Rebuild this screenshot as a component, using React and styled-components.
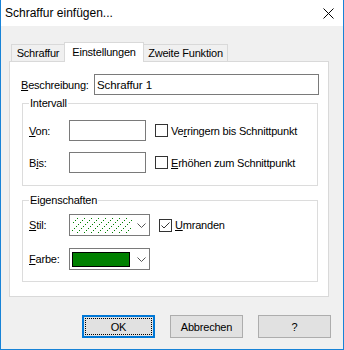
import React from 'react'
import styled, { createGlobalStyle } from 'styled-components'

const GlobalStyle = createGlobalStyle`
  html, body {
    margin: 0;
    padding: 0;
    background: #fff;
  }
  body {
    font-family: 'Liberation Sans', Arial, sans-serif;
    font-size: 11px;
    letter-spacing: -0.2px;
    color: #000;
  }
  * {
    box-sizing: border-box;
  }
`

const Window = styled.div`
  width: 344px;
  height: 350px;
  display: flex;
  flex-direction: column;
  background: #f0f0f0;
  border: 1px solid #1883d7;
  border-top: none;
`

const TitleBar = styled.div`
  height: 26px;
  flex: none;
  display: flex;
  align-items: center;
  justify-content: space-between;
  background: #fff;
  padding: 0 9px 0 4px;
  font-size: 12px;
  letter-spacing: 0;
`

const Body = styled.div`
  display: flex;
  flex-direction: column;
  padding: 16px 12px 0 8px;
`

const TabStrip = styled.div`
  display: flex;
  align-items: flex-end;
  height: 20px;
  margin-bottom: -1px;
  padding-left: 2px;
  position: relative;
  z-index: 1;
`

const Tab = styled.div`
  width: ${(p) => p.$w}px;
  height: ${(p) => (p.$active ? 20 : 17)}px;
  margin-bottom: ${(p) => (p.$active ? 0 : 1)}px;
  margin-left: ${(p) => (p.$first ? 0 : -1)}px;
  display: flex;
  align-items: center;
  justify-content: center;
  padding-bottom: ${(p) => (p.$active ? 2 : 0)}px;
  border: 1px solid #d9d9d9;
  border-bottom: none;
  background: ${(p) => (p.$active ? '#fff' : '#f0f0f0')};
  position: relative;
  z-index: ${(p) => (p.$active ? 2 : 1)};
  white-space: nowrap;
`

const Panel = styled.div`
  height: 236px;
  margin-right: 2px;
  background: #fff;
  border: 1px solid #d9d9d9;
  padding: 12px 9px 0 11px;
  display: flex;
  flex-direction: column;
`

const Row = styled.div`
  display: flex;
  align-items: center;
  height: ${(p) => p.$h || 21}px;
  margin-top: ${(p) => p.$gap || 0}px;
`

const Label = styled.span`
  width: ${(p) => p.$w}px;
  flex: none;
  white-space: nowrap;
`

const Key = styled.span`
  text-decoration: underline;
`

const Input = styled.div`
  width: ${(p) => p.$w}px;
  height: 21px;
  flex: none;
  border: 1px solid #7a7a7a;
  background: #fff;
  display: flex;
  align-items: center;
  padding-left: 2px;
  font-size: 11.5px;
  letter-spacing: -0.1px;
`

const Group = styled.fieldset`
  margin: ${(p) => p.$top}px 1px 0;
  padding: ${(p) => p.$pad};
  border: 1px solid #dcdcdc;
  min-width: 0;
`

const Legend = styled.legend`
  padding: 0 1px;
  line-height: 14px;
  font-size: 11px;
`

const CheckLabel = styled.label`
  display: flex;
  align-items: center;
  margin-left: 9px;
  gap: 3px;
  white-space: nowrap;
`

const Box = styled.span`
  width: 13px;
  height: 13px;
  border: 1px solid #333;
  background: #fff;
  display: flex;
  align-items: center;
  justify-content: center;
`

const Combo = styled.div`
  width: 81px;
  height: 22px;
  flex: none;
  border: 1px solid #7a7a7a;
  background: #fff;
  display: flex;
  align-items: center;
  padding: 0 2px;
  svg.chev {
    margin-left: auto;
    margin-right: 1px;
  }
`

const Swatch = styled.div`
  width: 58px;
  height: 15px;
  border: 1px solid #000;
  background: ${(p) => p.$color};
`

const Buttons = styled.div`
  display: flex;
  justify-content: flex-end;
  gap: 15px;
  margin-top: 18px;
`

const Button = styled.button`
  width: 73px;
  height: 23px;
  padding: 0;
  font-family: inherit;
  font-size: 11px;
  letter-spacing: -0.2px;
  color: #000;
  background: #e1e1e1;
  border: ${(p) => (p.$default ? '2px solid #0078d7' : '1px solid #adadad')};
  outline: ${(p) => (p.$default ? '1px dotted #000' : 'none')};
  outline-offset: -4px;
`

const Close = () => (
  <svg width='11' height='11' viewBox='0 0 11 11'>
    <path d='M0.5 0.5L10.5 10.5M10.5 0.5L0.5 10.5' stroke='#000' strokeWidth='1' />
  </svg>
)

const Chevron = () => (
  <svg className='chev' width='9' height='5' viewBox='0 0 9 5'>
    <polyline points='0.5,0.5 4.5,4.5 8.5,0.5' fill='none' stroke='#555' strokeWidth='1' />
  </svg>
)

// dotted diagonal hatch, one pixel every second step
const Hatch = () => {
  const dots = []
  const W = 60
  const H = 16
  for (let start = -H; start < W; start += 7) {
    for (let k = 0; k < H; k += 2) {
      const x = start + k
      const y = H - 1 - k
      if (x >= 0 && x < W) dots.push(<rect key={`${start}-${k}`} x={x} y={y} width='1' height='1' />)
    }
  }
  return (
    <svg width={W} height={H} viewBox={`0 0 ${W} ${H}`} fill='#008000' shapeRendering='crispEdges'>
      {dots}
    </svg>
  )
}

const Checkbox = ({ checked, children }) => (
  <CheckLabel>
    <Box>
      {checked && (
        <svg width='11' height='11' viewBox='0 0 11 11'>
          <polyline points='1.5,5.5 4,8 9.5,2.5' fill='none' stroke='#333' strokeWidth='1' />
        </svg>
      )}
    </Box>
    <span>{children}</span>
  </CheckLabel>
)

export default function App() {
  return (
    <>
      <GlobalStyle />
      <Window>
        <TitleBar>
          <span>Schraffur einfügen...</span>
          <Close />
        </TitleBar>
        <Body>
          <TabStrip>
            <Tab $w={54} $first>Schraffur</Tab>
            <Tab $w={80} $active>Einstellungen</Tab>
            <Tab $w={85}>Zweite Funktion</Tab>
          </TabStrip>
          <Panel>
            <Row>
              <Label $w={73}>
                <Key>B</Key>eschreibung:
              </Label>
              <Input $w={225}>Schraffur 1</Input>
            </Row>

            <Group $top={1} $pad='10px 0 12px 6px'>
              <Legend>Intervall</Legend>
              <Row>
                <Label $w={40}>
                  <Key>V</Key>on:
                </Label>
                <Input $w={77} />
                <Checkbox>
                  Ve<Key>r</Key>ringern bis Schnittpunkt
                </Checkbox>
              </Row>
              <Row $gap={11}>
                <Label $w={40}>
                  B<Key>i</Key>s:
                </Label>
                <Input $w={77} />
                <Checkbox>
                  <Key>E</Key>rhöhen zum Schnittpunkt
                </Checkbox>
              </Row>
            </Group>

            <Group $top={7} $pad='7px 0 11px 6px'>
              <Legend>Eigenschaften</Legend>
              <Row $h={22}>
                <Label $w={40}>
                  <Key>S</Key>til:
                </Label>
                <Combo>
                  <Hatch />
                  <Chevron />
                </Combo>
                <Checkbox checked>
                  <Key>U</Key>mranden
                </Checkbox>
              </Row>
              <Row $h={22} $gap={12}>
                <Label $w={40}>
                  <Key>F</Key>arbe:
                </Label>
                <Combo>
                  <Swatch $color='#008000' />
                  <Chevron />
                </Combo>
              </Row>
            </Group>
          </Panel>

          <Buttons>
            <Button $default>OK</Button>
            <Button>Abbrechen</Button>
            <Button>?</Button>
          </Buttons>
        </Body>
      </Window>
    </>
  )
}
